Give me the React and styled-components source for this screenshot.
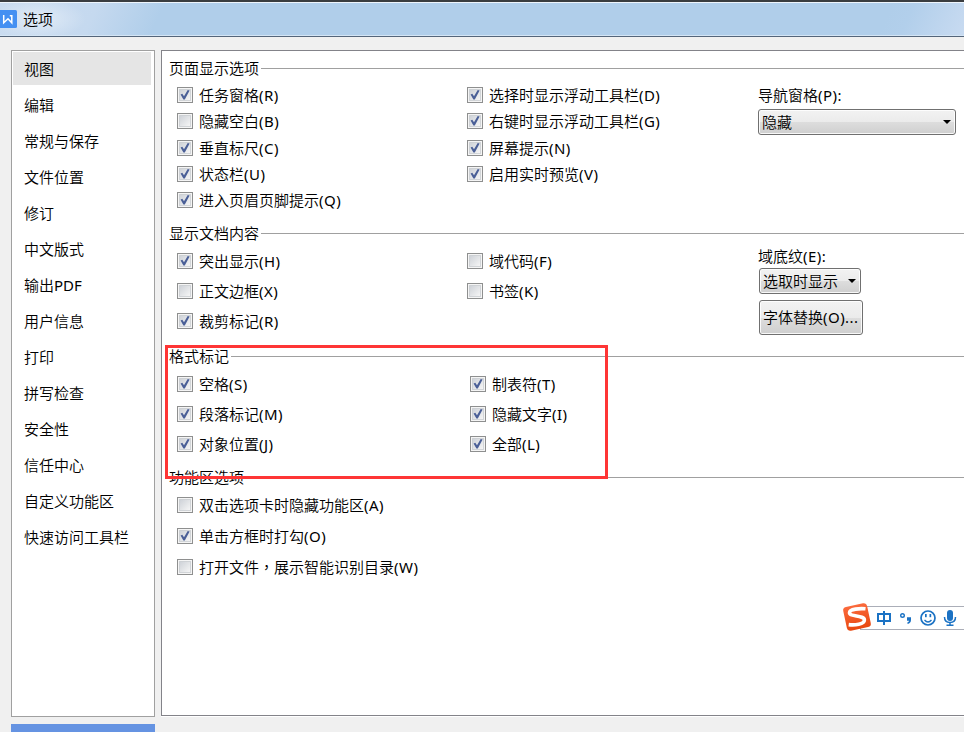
import React from "react";
import styled, { createGlobalStyle } from "styled-components";

const GlobalStyle = createGlobalStyle`
  * { box-sizing: border-box; }
  body {
    margin: 0;
    overflow: hidden;
    background: #f0f0f0;
    color: #000;
    font: 350 15px/20px "Noto Sans CJK SC", "Noto Sans", sans-serif;
  }
`;

const Dialog = styled.div`
  position: relative;
  width: 964px;
  height: 732px;
  overflow: hidden;
  display: flex;
  flex-direction: column;
`;

const TitleBar = styled.header`
  flex: none;
  height: 37px;
  display: flex;
  align-items: center;
  gap: 6px;
  border-top: 2px solid #3a3d40;
  border-bottom: 1px solid #54657a;
  box-shadow: inset 0 1px #eef5fc, inset 0 -1px #d4e5f5;
  background:
    radial-gradient(ellipse 48px 20px at 38px 17px, rgba(255, 255, 255, 0.45), transparent),
    linear-gradient(115deg, #cadcf0 0, #c5d9ef 90px, #b0ceea 150px, #b0ceea 810px, #b2cfeb 830px, #c9dbf1 890px);
`;

const Logo = styled.svg`
  display: block;
  width: 17px;
  height: 18px;
  flex: none;
`;

const Columns = styled.div`
  flex: 1;
  display: flex;
  align-items: flex-start;
  gap: 6px;
  padding: 13px 0 0 11px;
`;

const SideColumn = styled.div`
  flex: none;
  width: 144px;
`;

const NavList = styled.nav`
  height: 667px;
  padding: 1px 3px 1px 1px;
  background: #fff;
  border: 1px solid #a0a0a0;
`;

const NavItem = styled.div`
  display: flex;
  align-items: center;
  height: ${(p) => (p.$active ? 33 : 36)}px;
  margin-bottom: ${(p) => (p.$active ? 2 : 0)}px;
  padding-left: 11px;
  background: ${(p) => (p.$active ? "#e5e5e5" : "transparent")};
`;

const Footer = styled.div`
  height: 20px;
  margin-top: 7px;
  background: #6593e2;
`;

const Panel = styled.main`
  flex: 1;
  height: 666px;
  padding: 7px 0 0 7px;
  background: #fff;
  border: solid #838389;
  border-width: 1px 0 1px 1px;
  box-shadow: 0 1px #fff;
`;

const Group = styled.section`
  height: ${(p) => p.$height}px;
`;

const GroupTitle = styled.h2`
  margin: 0;
  height: 20px;
  display: flex;
  align-items: center;
  gap: 2px;
  font-size: 15px;
  font-weight: inherit;
  white-space: nowrap;

  &::after {
    content: "";
    flex: 1;
    height: 1px;
    background: #a0a0a0;
  }
`;

const GroupBody = styled.div`
  display: grid;
  grid-template-columns: ${(p) => p.$first || 290}px ${(p) => 581 - (p.$first || 290)}px 1fr;
  padding: ${(p) => p.$top}px 0 0 8px;
`;

const CheckRow = styled.div`
  height: ${(p) => p.$height}px;
  display: flex;
  align-items: center;
  gap: 6px;
  white-space: nowrap;
`;

const CheckBox = styled.svg`
  flex: none;
  width: 16px;
  height: 16px;
`;

const Label = styled.span`
  white-space: nowrap;
`;

const Latin = styled.span`
  font-family: "Noto Sans", "Open Sans", sans-serif;
  font-weight: 400;
  letter-spacing: ${(p) => (p.$plain ? 0 : 0.45)}px;
`;

const Comma = styled.span`
  font-family: "Noto Sans CJK TC", sans-serif;
`;

const SideControls = styled.div`
  display: flex;
  flex-direction: column;
  align-items: flex-start;
  padding-top: ${(p) => p.$top}px;
`;

const Button = styled.button`
  width: ${(p) => p.$width}px;
  height: ${(p) => p.$height}px;
  margin: ${(p) => p.$margin || "0"};
  padding: 0 4px 1px 3px;
  display: flex;
  align-items: center;
  justify-content: space-between;
  border: 1px solid #707070;
  border-radius: 3px;
  box-shadow: inset 0 0 0 1px rgba(255, 255, 255, 0.85);
  background: linear-gradient(#f2f2f2 0, #ebebeb 50%, #dddddd 51%, #cfcfcf 100%);
  color: #000;
  font: inherit;
  white-space: nowrap;
`;

const Arrow = styled.svg`
  flex: none;
  width: 8px;
  height: 4px;
`;

const Highlight = styled.div`
  position: absolute;
  left: 165px;
  top: 345px;
  width: 443px;
  height: 134px;
  border: 3px solid #fe3535;
`;

const InputBar = styled.svg`
  position: absolute;
  left: 840px;
  top: 600px;
  width: 124px;
  height: 34px;
`;

const nav = [
  "视图", "编辑", "常规与保存", "文件位置", "修订", "中文版式", "输出PDF",
  "用户信息", "打印", "拼写检查", "安全性", "信任中心", "自定义功能区", "快速访问工具栏",
];

function Text({ children }) {
  return (
    <Label>
      {children.split(/([\x20-\x7e]+|，)/).map((part, i) => {
        if (part === "，") return <Comma key={i} lang="zh-TW">{part}</Comma>;
        return i % 2 ? <Latin key={i} $plain={!part.startsWith("(")}>{part}</Latin> : part;
      })}
    </Label>
  );
}

function Check({ on, height, children }) {
  return (
    <CheckRow $height={height}>
      <CheckBox viewBox="0 0 16 16">
        <defs>
          <linearGradient id="boxFill" x1="0" y1="0" x2="1" y2="1">
            <stop offset="0" stopColor="#cdd1d7" />
            <stop offset="1" stopColor="#f7f7f7" />
          </linearGradient>
        </defs>
        <rect x="0.5" y="0.5" width="15" height="15" fill="#f5f5f5" stroke="#8e8f8f" />
        <rect x="2.5" y="2.5" width="11" height="11" fill="url(#boxFill)" stroke="#c3c7cc" strokeOpacity="0.7" />
        {on && <path d="M3.6 7.4L5.3 6.7L7 9.3L10.7 3L12.6 3.5L7.8 12.4H6.4Z" fill="#4a5f97" />}
      </CheckBox>
      <Text>{children}</Text>
    </CheckRow>
  );
}

function CheckList({ items, height }) {
  return (
    <div>
      {items.map(([label, on]) => (
        <Check key={label} on={on} height={height}>{label}</Check>
      ))}
    </div>
  );
}

function DropArrow() {
  return (
    <Arrow viewBox="0 0 8 4"><path d="M0 0H8L4 4Z" fill="#000" /></Arrow>
  );
}

export default function App() {
  return (
    <Dialog>
      <GlobalStyle />
      <TitleBar>
        <Logo viewBox="0 0 17 18">
          <rect x="-3" width="20" height="18" rx="1.5" fill="#4490f2" />
          <path d="M3.7 5V12.8L8 8.8L11.8 12.8V5.7H9.8" fill="none" stroke="#fff" strokeWidth="1.5" />
        </Logo>
        <Label>选项</Label>
      </TitleBar>
      <Columns>
        <SideColumn>
          <NavList>
            {nav.map((name, i) => (
              <NavItem key={name} $active={i === 0}><Text>{name}</Text></NavItem>
            ))}
          </NavList>
          <Footer />
        </SideColumn>
        <Panel>
          <Group $height={165}>
            <GroupTitle>页面显示选项</GroupTitle>
            <GroupBody $top={4}>
              <CheckList height={26.25} items={[
                ["任务窗格(R)", true], ["隐藏空白(B)", false], ["垂直标尺(C)", true],
                ["状态栏(U)", true], ["进入页眉页脚提示(Q)", true],
              ]} />
              <CheckList height={26.25} items={[
                ["选择时显示浮动工具栏(D)", true], ["右键时显示浮动工具栏(G)", true],
                ["屏幕提示(N)", true], ["启用实时预览(V)", true],
              ]} />
              <SideControls $top={3}>
                <Text>导航窗格(P):</Text>
                <Button $width={198} $height={26} $margin="4px 0 0">
                  <Text>隐藏</Text><DropArrow />
                </Button>
              </SideControls>
            </GroupBody>
          </Group>
          <Group $height={123}>
            <GroupTitle>显示文档内容</GroupTitle>
            <GroupBody $top={3}>
              <CheckList height={30} items={[
                ["突出显示(H)", true], ["正文边框(X)", false], ["裁剪标记(R)", true],
              ]} />
              <CheckList height={30} items={[["域代码(F)", false], ["书签(K)", false]]} />
              <SideControls $top={0}>
                <Text>域底纹(E):</Text>
                <Button $width={102} $height={26} $margin="2px 0 0 1px">
                  <Text>选取时显示</Text><DropArrow />
                </Button>
                <Button $width={104} $height={35} $margin="6px 0 0 1px">
                  <Text>字体替换(O)...</Text>
                </Button>
              </SideControls>
            </GroupBody>
          </Group>
          <Group $height={121}>
            <GroupTitle>格式标记</GroupTitle>
            <GroupBody $top={3} $first={293}>
              <CheckList height={30} items={[
                ["空格(S)", true], ["段落标记(M)", true], ["对象位置(J)", true],
              ]} />
              <CheckList height={30} items={[
                ["制表符(T)", true], ["隐藏文字(I)", true], ["全部(L)", true],
              ]} />
            </GroupBody>
          </Group>
          <Group $height={120}>
            <GroupTitle>功能区选项</GroupTitle>
            <GroupBody $top={2}>
              <CheckList height={31} items={[
                ["双击选项卡时隐藏功能区(A)", false], ["单击方框时打勾(O)", true],
                ["打开文件，展示智能识别目录(W)", false],
              ]} />
            </GroupBody>
          </Group>
        </Panel>
      </Columns>
      <Highlight />
      <InputBar viewBox="0 0 124 34">
        <defs>
          <linearGradient id="badge" x1="0" y1="0" x2="0" y2="1">
            <stop offset="0" stopColor="#fb6a3c" />
            <stop offset="1" stopColor="#e8470e" />
          </linearGradient>
        </defs>
        <rect x="20.5" y="6.5" width="110" height="23" fill="#fff" stroke="#abaeb8" />
        <rect x="4.8" y="4.8" width="24.4" height="24.4" rx="3.5" fill="url(#badge)" transform="rotate(-12 17 17)" />
        <path d="M25.5 8.8C20 8.2 9.5 9 9.5 12.7C9.5 17 24.4 14.8 24.4 20C24.4 24.4 14.5 25.3 8.7 24.6" fill="none" stroke="#fff" strokeWidth="3.6" />
        <g fill="none" stroke="#1b72c4" strokeWidth="2">
          <path d="M38 14H50V21H38ZM44 11V25" />
          <circle cx="62.5" cy="15.5" r="1.8" strokeWidth="1.4" />
          <circle cx="88" cy="18" r="7" strokeWidth="1.7" />
          <path d="M84.5 20Q88 24 91.5 20" strokeWidth="1.3" />
          <path d="M104.5 17Q104.5 22.5 110 22.5Q115.5 22.5 115.5 17M110 22V26M106.5 25.3H113.5" strokeWidth="1.5" />
        </g>
        <g fill="#1b72c4">
          <rect x="107" y="10" width="6" height="11" rx="3" />
          <rect x="85" y="14" width="1.7" height="3.2" />
          <rect x="89.5" y="14" width="1.7" height="3.2" />
          <path d="M67 17.3H71V20Q71 23 67.5 24V22.3Q69 21.8 69 20.8H67Z" />
        </g>
      </InputBar>
    </Dialog>
  );
}
